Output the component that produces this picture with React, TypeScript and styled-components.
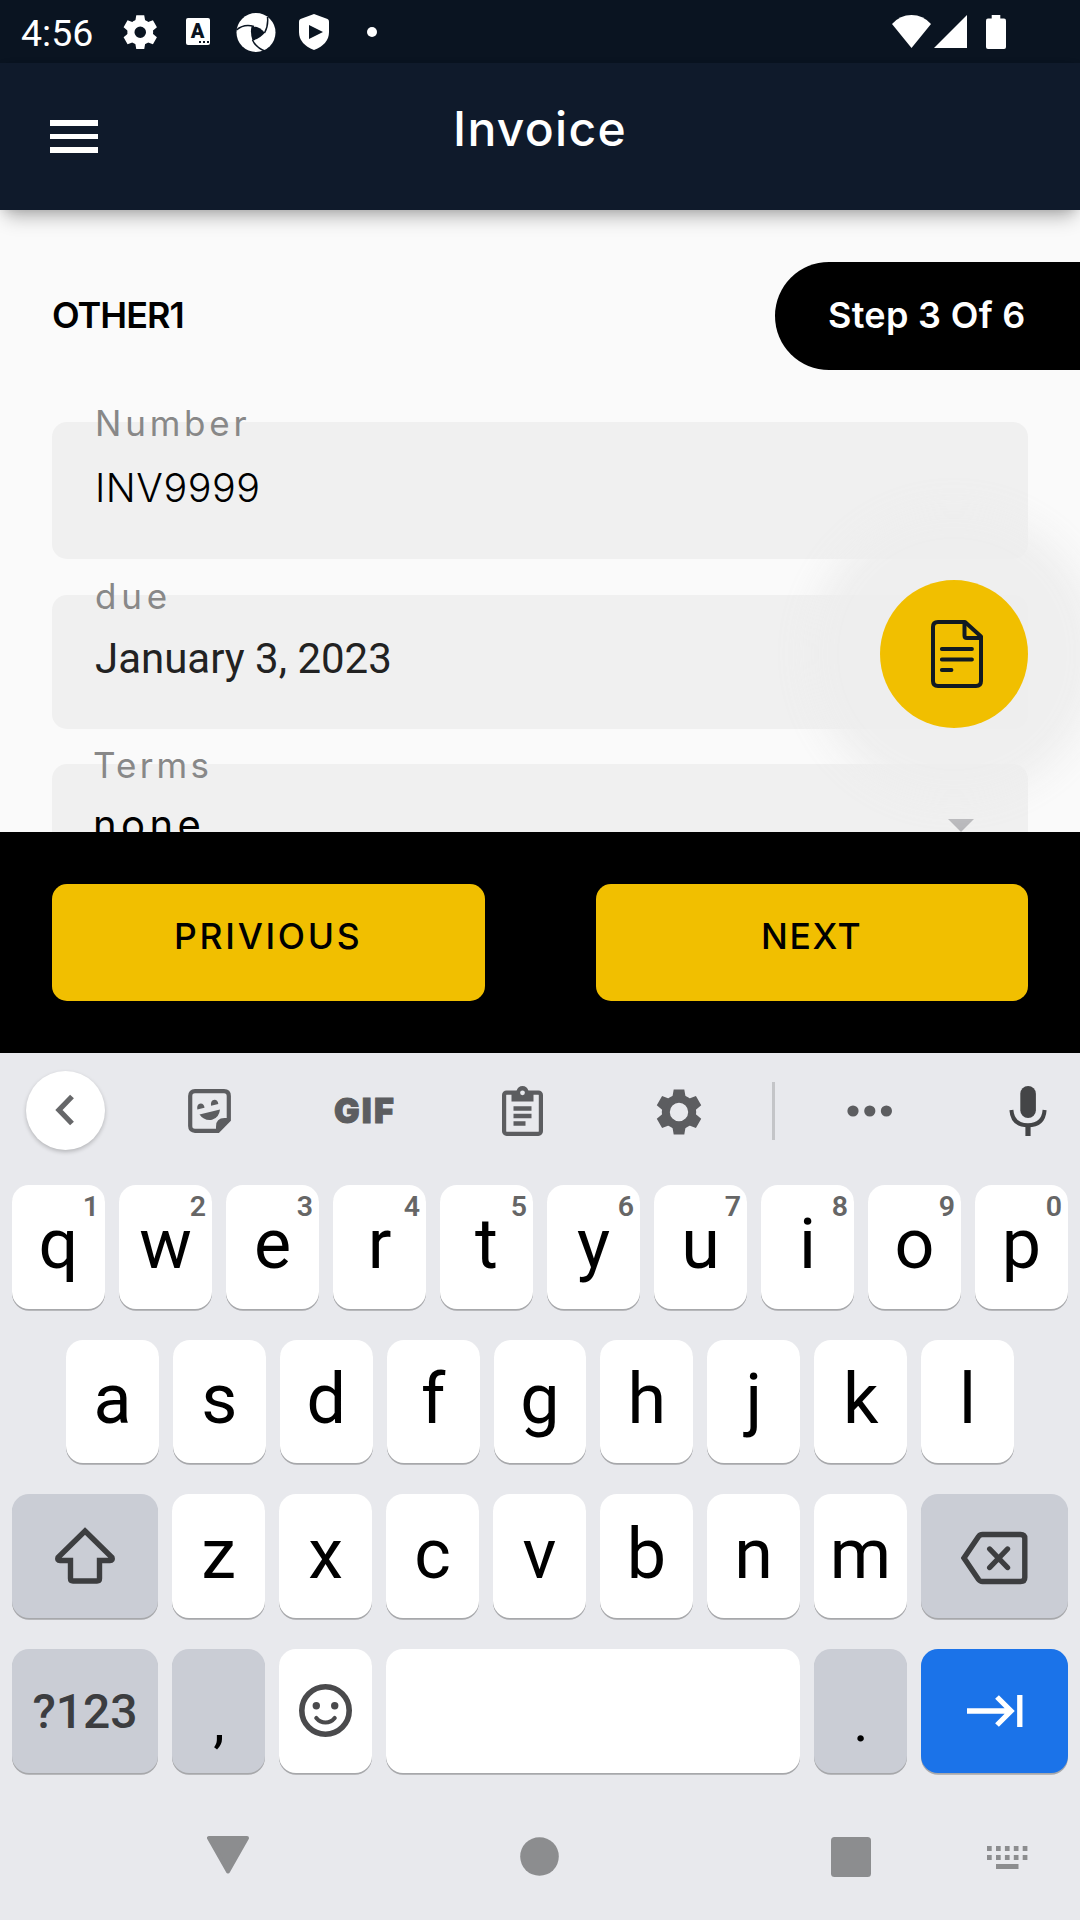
import React from "react";
import styled, { createGlobalStyle } from "styled-components";

const GlobalStyle = createGlobalStyle`
  * { box-sizing: border-box; }
  html, body { margin: 0; padding: 0; background: #fafafa; }
  svg { display: block; flex: none; }
  button { border: 0; padding: 0; margin: 0; background: none; font: inherit; color: inherit; }
`;

const heading = `"Inter", "Noto Sans", sans-serif`;
const system = `"Roboto", "Noto Sans", sans-serif`;

const Screen = styled.div`
  width: 1080px;
  height: 1920px;
  display: flex;
  flex-direction: column;
  overflow: hidden;
  background: #fafafa;
  font-family: ${heading};
`;

const StatusBar = styled.div`
  height: 63px;
  flex: none;
  display: flex;
  align-items: center;
  padding: 0 74px 0 21px;
  background: #0a1421;
  color: #fff;
`;

const Clock = styled.span`
  width: 101px;
  font: 400 37.5px/63px ${system};
  padding-top: 4px;
`;

const StatusIcons = styled.div`
  display: flex;
  align-items: center;
  flex: 1;
`;

const Signals = styled.div`
  display: flex;
  align-items: center;
`;

const Glyph = styled.span<{ $left?: number; $top?: number }>`
  display: flex;
  margin-left: ${(p) => p.$left ?? 0}px;
  padding-top: ${(p) => p.$top ?? 0}px;
`;

const LetterBadge = styled.span`
  display: flex;
  flex-direction: column;
  align-items: center;
  width: 24px;
  height: 27px;
  margin-left: 28px;
  border-radius: 2px;
  background: #fff;
  color: #0a1421;
  font: 900 20px/27px ${system};
`;

const BadgeDots = styled.span`
  align-self: flex-end;
  width: 10px;
  height: 2px;
  margin: -4px 1px 0 0;
  background: repeating-linear-gradient(90deg, #0a1421 0 2px, #fff 2px 4px);
`;

const AppBar = styled.header`
  height: 147px;
  flex: none;
  display: grid;
  grid-template-columns: 150px 1fr 150px;
  align-items: center;
  padding-bottom: 13px;
  background: #0f1a2b;
  color: #fff;
  z-index: 1;
  box-shadow: 0 12px 18px -6px rgba(0, 0, 0, 0.3), 0 2px 10px -2px rgba(0, 0, 0, 0.12);
`;

const MenuButton = styled.button`
  display: flex;
  flex-direction: column;
  gap: 7.5px;
  width: 48px;
  margin: 13px 0 0 49.5px;
`;

const MenuLine = styled.span`
  height: 5.7px;
  background: #fff;
`;

const Title = styled.h1`
  margin: -2px 0 0;
  text-align: center;
  font-size: 48px;
  font-weight: 500;
  line-height: 60px;
  letter-spacing: 1.3px;
`;

const Form = styled.main`
  height: 621.5px;
  flex: none;
  display: flex;
  flex-direction: column;
  padding-top: 52px;
  overflow: hidden;
`;

const StepRow = styled.div`
  display: flex;
  justify-content: space-between;
  align-items: center;
  height: 108px;
  flex: none;
  margin-bottom: 52px;
  padding-left: 52px;
`;

const SectionName = styled.h2`
  margin: 0;
  padding-bottom: 3px;
  font-size: 36px;
  font-weight: 600;
  line-height: 44px;
  letter-spacing: -1px;
  color: #000;
`;

const StepPill = styled.div`
  width: 305px;
  height: 108px;
  padding-left: 53px;
  border-radius: 54px 0 0 54px;
  background: #000;
  color: #fff;
  font-size: 36px;
  font-weight: 600;
  line-height: 106px;
  letter-spacing: 0.3px;
  white-space: nowrap;
`;

const Field = styled.label<{ $height: number; $gap: number; $inset: number }>`
  display: flex;
  flex-direction: column;
  flex: none;
  height: ${(p) => p.$height}px;
  margin: 0 52px ${(p) => p.$gap}px;
  padding-left: ${(p) => p.$inset}px;
  border-radius: 15px;
  background: #f0f0f0;
`;

const FieldLabel = styled.span<{ $spacing: number }>`
  height: 44px;
  margin-top: -21px;
  font-size: 35px;
  line-height: 44px;
  letter-spacing: ${(p) => p.$spacing}px;
  color: #888;
`;

const FieldValue = styled.span`
  margin-top: 12.5px;
  font-size: 39.5px;
  font-weight: 350;
  line-height: 60px;
  letter-spacing: 0.5px;
  color: #000;
`;

const DateValue = styled(FieldValue)`
  margin-top: 11px;
  font: 400 42px/60px ${system};
  letter-spacing: 0;
  color: #222;
`;

const SelectValue = styled.div`
  display: flex;
  align-items: center;
  justify-content: space-between;
  padding-right: 54px;
  margin-top: 8px;
  font-size: 40px;
  line-height: 60px;
  letter-spacing: 4.4px;
  color: #000;
`;

const Caret = styled.span`
  width: 0;
  height: 0;
  border: 13px solid transparent;
  border-top-color: #b7b7ba;
  border-bottom: 0;
`;

const FloatingButton = styled.button`
  position: absolute;
  left: 880px;
  top: 580px;
  display: flex;
  align-items: center;
  justify-content: center;
  width: 148px;
  height: 148px;
  padding-left: 6px;
  border-radius: 50%;
  background: #f1bf00;
  box-shadow: 0 0 34px 71px rgba(237, 237, 237, 0.9);
`;

const Actions = styled.div`
  height: 221.5px;
  flex: none;
  display: flex;
  justify-content: space-between;
  padding: 52px 52px 0;
  background: #000;
  z-index: 1;
`;

const ActionButton = styled.button<{ $spacing: number }>`
  width: 432.5px;
  height: 117px;
  padding-bottom: 11px;
  border-radius: 15px;
  background: #f1bf00;
  color: #000;
  font-size: 35.5px;
  font-weight: 500;
  letter-spacing: ${(p) => p.$spacing}px;
`;

const Keyboard = styled.section`
  flex: 1;
  display: flex;
  flex-direction: column;
  background: #e8e9ed;
  font-family: ${system};
`;

const Toolbar = styled.div`
  display: grid;
  grid-template-columns: 131px 157px 153px 162px 152px 37px 156px 159px;
  align-items: center;
  justify-items: center;
  width: 1080px;
  height: 116px;
  margin-bottom: 16px;
  flex: none;
  overflow: hidden;
`;

const BackCircle = styled.button`
  display: flex;
  align-items: center;
  justify-content: center;
  width: 79px;
  height: 79px;
  margin-bottom: 2px;
  padding-right: 1px;
  border-radius: 50%;
  background: #fff;
  box-shadow: 0 2px 4px rgba(0, 0, 0, 0.22);
`;

const GifLabel = styled.span`
  font: 900 34px/40px ${heading};
  letter-spacing: 2.2px;
  padding-left: 1px;
  color: #5c5d60;
  -webkit-text-stroke: 1px #5c5d60;
`;

const Divider = styled.span`
  width: 3px;
  height: 58px;
  background: #c4c5c8;
`;

const KeyRow = styled.div<{ $inset?: number }>`
  display: flex;
  flex: none;
  gap: 14px;
  height: 124px;
  margin-bottom: 30.7px;
  padding: 0 ${(p) => p.$inset ?? 12}px;
`;

const tones = { light: "#ffffff", dark: "#cacdd5", blue: "#1b73e9" };

const Key = styled.button<{ $tone?: keyof typeof tones; $width?: number }>`
  position: relative;
  display: flex;
  align-items: center;
  justify-content: center;
  flex: ${(p) => (p.$width ? `0 0 ${p.$width}px` : "1 1 0")};
  height: 123.5px;
  padding-bottom: 5px;
  border-radius: 17px;
  background: ${(p) => tones[p.$tone ?? "light"]};
  box-shadow: 0 1.7px 0 #a7a8ab;
  font: 400 70px/1 ${system};
  color: #000;
`;

const IconKey = styled(Key)<{ $drop?: number }>`
  padding-top: ${(p) => p.$drop ?? 0}px;
  padding-bottom: 0;
`;

const ModeKey = styled(Key)`
  padding: 2px 0 0;
  font-size: 48px;
  font-weight: 500;
  color: #3c3d40;
`;

const PunctuationKey = styled(Key)`
  padding: 21px 0 0 1px;
  font-size: 58px;
`;

const Hint = styled.span`
  position: absolute;
  right: 6px;
  top: 6px;
  font: 600 28.5px/32px ${system};
  color: #666;
`;

const NavBar = styled.nav`
  display: grid;
  grid-template-columns: 456px 168px 454px;
  flex: 1;
`;

const NavItem = styled.span<{ $left: number; $top: number }>`
  display: flex;
  padding: ${(p) => p.$top}px 0 0 ${(p) => p.$left}px;
`;

const NavPair = styled.div`
  display: flex;
`;

function Gear({ size, color, ring = 8 }: { size: number; color: string; ring?: number }) {
  return (
    <svg width={size} height={size} viewBox="-23 -23 46 46" fill={color}>
      <circle r={17.2 - ring / 2} fill="none" stroke={color} strokeWidth={ring} />
      {[0, 60, 120, 180, 240, 300].map((a) => (
        <path key={a} d="M-5.3-22.6H5.3L6.6-15L8.6-13.5H-8.6L-6.6-15Z" transform={`rotate(${a})`} />
      ))}
    </svg>
  );
}

const Aperture = () => (
  <svg width="40" height="40" viewBox="0 0 40 40" fill="none">
    <circle cx="20" cy="20.5" r="19.5" fill="#fff" />
    <path d="M15.5 14.5Q23 14 28.8 20.7Q23.500 27 16.500 28.500Q14 21 15.500 14.500Z" fill="#0a1421" />
    <path d="M.5 18Q8 11.500 18 14.500M31.500 5Q32.500 14 28.500 21M16.500 28Q20 36 30 39.500" stroke="#0a1421" strokeWidth="1.5" />
  </svg>
);

const Shield = () => (
  <svg width="30" height="36" viewBox="0 0 30 36">
    <path d="M15 0L28.500 5Q30 5.600 30 7.500V18Q30 30 15 36Q0 30 0 18V7.500Q0 5.600 1.500 5Z" fill="#fff" />
    <path d="M10 11L24 18L10 25Z" fill="#0a1421" />
  </svg>
);

const Wifi = () => (
  <svg width="39" height="33" viewBox="0 0 39 33">
    <path d="M0 9Q8 0 19.500 0T39 9L19.500 33Z" fill="#fff" />
  </svg>
);

const Cell = () => (
  <svg width="33" height="33" viewBox="0 0 33 33">
    <path d="M33 0V33H0Z" fill="#fff" />
  </svg>
);

const Battery = () => (
  <svg width="20" height="34" viewBox="0 0 20 34" fill="#fff">
    <rect x="5.700" width="8.600" height="6" />
    <rect y="3.500" width="20" height="30.500" rx="2" />
  </svg>
);

const DocumentIcon = () => (
  <svg width="52" height="68" viewBox="0 0 52 68" fill="none" stroke="#111a22" strokeWidth="4" strokeLinejoin="round" strokeLinecap="round">
    <path d="M34 2H7Q2 2 2 7V61Q2 66 7 66H45Q50 66 50 61V16.500Z" />
    <path d="M33.500 3V15.500Q33.500 18 36 18H49" />
    <path d="M10.800 29H41M10.800 39.500H41M10.800 50H20.500" strokeWidth="3.800" />
  </svg>
);

const Chevron = () => (
  <svg width="20" height="32" viewBox="0 0 20 32" fill="none">
    <path d="M17 2.500L4 16L17 29.500" stroke="#666769" strokeWidth="5.300" />
  </svg>
);

const Sticker = () => (
  <svg width="43" height="44" viewBox="0 0 43 44">
    <path d="M7 2.200H36Q40.800 2.200 40.800 7V31L30 41.800H7Q2.200 41.800 2.200 37V7Q2.200 2.200 7 2.200Z" fill="none" stroke="#5c5d60" strokeWidth="4.200" />
    <path d="M28 43V37.500Q28 29 36.500 29H42L30 43Z" fill="#5c5d60" />
    <path d="M11.500 25.500L32 20.500Q31 29 24 30.800Q16 32 11.500 25.500Z" fill="#5c5d60" />
    <path d="M9.300 20.500Q8.500 15 12.700 14.500Q16.200 14.700 16.500 18.700ZM23 16.800Q22.300 11.300 26.500 10.800Q30 11 30.300 15Z" fill="#5c5d60" />
  </svg>
);

const Clipboard = () => (
  <svg width="41" height="50" viewBox="0 0 41 50">
    <rect x="2.100" y="6.600" width="36.800" height="41.200" rx="2.500" fill="none" stroke="#5c5d60" strokeWidth="4.200" />
    <path d="M9.500 5H14.500Q16 0 20.500 0T26.500 5H31.500V15.500H9.500Z" fill="#5c5d60" />
    <circle cx="20.500" cy="6.800" r="2.400" fill="#e8e9ed" />
    <path d="M11.500 22.500H29.500M11.500 30H29.500M11.500 37.500H23.500" stroke="#5c5d60" strokeWidth="4.600" />
  </svg>
);

const More = () => (
  <svg width="46" height="12" viewBox="0 0 46 12" fill="#5c5d60">
    <circle cx="6" cy="6" r="5.600" />
    <circle cx="22.800" cy="6" r="5.600" />
    <circle cx="39.400" cy="6" r="5.600" />
  </svg>
);

const Mic = () => (
  <svg width="38" height="50" viewBox="0 0 38 50">
    <rect x="11.300" y="0" width="15.600" height="32" rx="7.800" fill="#444547" />
    <path d="M2.400 24Q3.500 39.200 19 39.200T35.600 24" fill="none" stroke="#444547" strokeWidth="4" />
    <path d="M19 39V50" stroke="#444547" strokeWidth="5.200" />
  </svg>
);

const Shift = () => (
  <svg width="60" height="58" viewBox="0 0 60 58" fill="none">
    <path d="M30 4L57 30.500Q58 33.500 55 33.500H44.500V51.500Q44.500 54 42 54H18Q15.500 54 15.500 51.500V33.500H5Q2 33.500 3 30.500Z" stroke="#3d3e40" strokeWidth="5.400" />
  </svg>
);

const Backspace = () => (
  <svg width="67" height="54" viewBox="0 0 67 54" fill="none" stroke="#3d3e40" strokeWidth="5.400">
    <path d="M21.500 3.500H59.500Q63.800 3.500 63.800 7.500V46.500Q63.800 50.500 59.500 50.500H21.500Q19 50.500 17.500 48.500L3 27L17.500 5.500Q19 3.500 21.500 3.500Z" />
    <path d="M28.700 18L46.500 36.500M46.500 18L28.700 36.500" strokeLinecap="round" />
  </svg>
);

const Smile = () => (
  <svg width="54" height="54" viewBox="0 0 54 54" fill="none" stroke="#4a4a4c">
    <circle cx="26.500" cy="26.500" r="23.700" strokeWidth="5.600" />
    <path d="M17.300 34Q21 38.500 26.500 38.500T35.700 34" strokeWidth="4.200" strokeLinecap="round" />
    <circle cx="17.300" cy="21.800" r="3.700" fill="#4a4a4c" stroke="none" />
    <circle cx="35.700" cy="21.800" r="3.700" fill="#4a4a4c" stroke="none" />
  </svg>
);

const TabArrow = () => (
  <svg width="56" height="32" viewBox="0 0 56 32" fill="none" stroke="#fff" strokeWidth="5.300">
    <path d="M0 16H43M30 2L44 16L30 30M52.800 0V32" />
  </svg>
);

const KeyboardGlyph = () => (
  <svg width="41" height="24" viewBox="0 0 41 24" fill="#8c8d8f">
    {[0, 9, 17.900, 26.800, 35.700].map((x) => (
      <React.Fragment key={x}>
        <rect x={x} y="0" width="4.700" height="5" />
        <rect x={x} y="9" width="4.700" height="5" />
      </React.Fragment>
    ))}
    <rect x="9" y="18" width="22.500" height="5" />
  </svg>
);

export default function App() {
  return (
    <Screen>
      <GlobalStyle />
      <StatusBar>
        <Clock>4:56</Clock>
        <StatusIcons>
          <Glyph $left={1} $top={1}><Gear size={34.500} color="#fff" ring={9.500} /></Glyph>
          <LetterBadge>A<BadgeDots /></LetterBadge>
          <Glyph $left={26}><Aperture /></Glyph>
          <Glyph $left={23} $top={1}><Shield /></Glyph>
          <Glyph $left={38}>
            <svg width="10" height="10" viewBox="0 0 10 10"><circle cx="5" cy="5" r="5" fill="#fff" /></svg>
          </Glyph>
        </StatusIcons>
        <Signals>
          <Wifi />
          <Glyph $left={3}><Cell /></Glyph>
          <Glyph $left={19}><Battery /></Glyph>
        </Signals>
      </StatusBar>

      <AppBar>
        <MenuButton aria-label="Menu">
          <MenuLine /><MenuLine /><MenuLine />
        </MenuButton>
        <Title>Invoice</Title>
      </AppBar>

      <Form>
        <StepRow>
          <SectionName>OTHER1</SectionName>
          <StepPill>Step 3 Of 6</StepPill>
        </StepRow>
        <Field $height={137} $gap={36} $inset={43}>
          <FieldLabel $spacing={3.800}>Number</FieldLabel>
          <FieldValue>INV9999</FieldValue>
        </Field>
        <Field $height={134} $gap={35} $inset={43}>
          <FieldLabel $spacing={4.800}>due</FieldLabel>
          <DateValue>January 3, 2023</DateValue>
        </Field>
        <Field $height={134} $gap={0} $inset={41}>
          <FieldLabel $spacing={3.200}>Terms</FieldLabel>
          <SelectValue>none<Caret /></SelectValue>
        </Field>
      </Form>

      <FloatingButton aria-label="Document"><DocumentIcon /></FloatingButton>

      <Actions>
        <ActionButton $spacing={2.700}>PRIVIOUS</ActionButton>
        <ActionButton $spacing={1.600}>NEXT</ActionButton>
      </Actions>

      <Keyboard>
        <Toolbar>
          <BackCircle aria-label="Back"><Chevron /></BackCircle>
          <Sticker />
          <GifLabel>GIF</GifLabel>
          <Clipboard />
          <Glyph $top={2}><Gear size={46} color="#5c5d60" /></Glyph>
          <Divider />
          <More />
          <Mic />
        </Toolbar>
        <KeyRow>
          {[..."qwertyuiop"].map((c, i) => (
            <Key key={c}>{c}<Hint>{(i + 1) % 10}</Hint></Key>
          ))}
        </KeyRow>
        <KeyRow $inset={66}>
          {[..."asdfghjkl"].map((c) => <Key key={c}>{c}</Key>)}
        </KeyRow>
        <KeyRow>
          <IconKey $tone="dark" $width={146} aria-label="Shift"><Shift /></IconKey>
          {[..."zxcvbnm"].map((c) => <Key key={c}>{c}</Key>)}
          <IconKey $tone="dark" $width={147} $drop={4} aria-label="Backspace"><Backspace /></IconKey>
        </KeyRow>
        <KeyRow>
          <ModeKey $tone="dark" $width={146}>?123</ModeKey>
          <PunctuationKey $tone="dark" $width={93}>,</PunctuationKey>
          <IconKey $width={93} aria-label="Emoji"><Smile /></IconKey>
          <Key aria-label="Space" />
          <PunctuationKey $tone="dark" $width={93}>.</PunctuationKey>
          <IconKey $tone="blue" $width={147} aria-label="Next field"><TabArrow /></IconKey>
        </KeyRow>
        <NavBar>
          <NavItem $left={207} $top={32}>
            <svg width="42" height="38" viewBox="0 0 42 38">
              <path d="M2 2H40L21 35.500Z" fill="#8c8d8f" stroke="#8c8d8f" strokeWidth="4" strokeLinejoin="round" />
            </svg>
          </NavItem>
          <NavItem $left={64} $top={33.500}>
            <svg width="39" height="39" viewBox="0 0 39 39"><circle cx="19.500" cy="19.500" r="19.300" fill="#8c8d8f" /></svg>
          </NavItem>
          <NavPair>
            <NavItem $left={207} $top={33.500}>
              <svg width="40" height="40" viewBox="0 0 40 40"><rect width="40" height="40" rx="3.500" fill="#8c8d8f" /></svg>
            </NavItem>
            <NavItem $left={116} $top={42}><KeyboardGlyph /></NavItem>
          </NavPair>
        </NavBar>
      </Keyboard>
    </Screen>
  );
}
